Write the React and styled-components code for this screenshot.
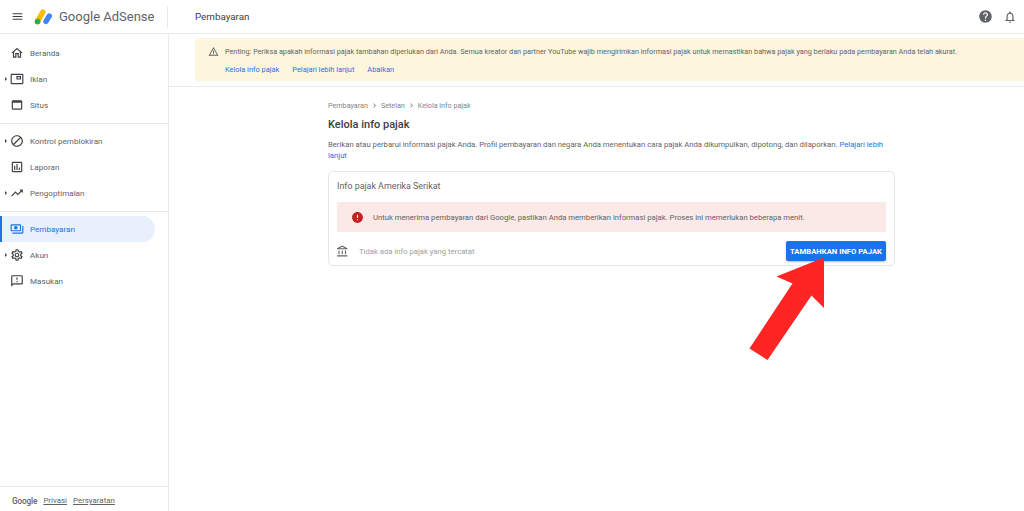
import styled, { createGlobalStyle } from "styled-components"
import {
  MdMenu, MdHelp, MdOutlineNotifications, MdOutlineHome, MdOutlinePictureInPicture, MdOutlineWebAsset,
  MdBlock, MdOutlineAssessment, MdTrendingUp, MdOutlinePayments, MdOutlineSettings,
  MdOutlineFeedback, MdWarningAmber, MdError, MdOutlineAccountBalance, MdChevronRight,
} from "react-icons/md"

const GlobalStyle = createGlobalStyle`
  html, body { margin: 0; padding: 0; background: #fff; }
  body { font-family: Roboto, "Liberation Sans", sans-serif; color: #3c4043; }
  a { text-decoration: none; color: inherit; }
`

const Page = styled.div`
  position: relative;
  width: 1024px;
  height: 511px;
  overflow: hidden;
  display: flex;
  flex-direction: column;
`

const TopBar = styled.header`
  height: 33px;
  flex: none;
  display: flex;
  align-items: center;
  border-bottom: 1px solid #e8eaed;
  padding-left: 11px;
  padding-right: 7px;
`

const Brand = styled.div`
  width: 156px;
  display: flex;
  align-items: center;
  color: #3c4043;
  .name {
    margin-left: 5px;
    font-size: 13px;
    color: #5f6368;
    white-space: nowrap;
  }
  .logo { margin-left: 10px; }
`

const PageName = styled.div`
  height: 22px;
  line-height: 22px;
  border-left: 1px solid #e8eaed;
  padding-left: 27px;
  font-size: 9.8px;
  color: #3c4043;
  flex: 1;
`

const TopActions = styled.div`
  display: flex;
  align-items: center;
  gap: 10px;
  color: #5f6368;
`

const Body = styled.div`
  flex: 1;
  display: flex;
  min-height: 0;
`

const Sidebar = styled.aside`
  width: 168px;
  flex: none;
  display: flex;
  flex-direction: column;
  border-right: 1px solid #e8eaed;
`

const NavGroup = styled.nav`
  padding: ${(p) => p.$padding};
  border-bottom: ${(p) => (p.$divided ? "1px solid #e8eaed" : "none")};
`

const NavRow = styled.a`
  position: relative;
  height: 26px;
  width: 155px;
  display: flex;
  align-items: center;
  padding-left: 10px;
  box-sizing: border-box;
  column-gap: 6px;
  font-size: 8.1px;
  color: ${(p) => (p.$active ? "#1a73e8" : "#5f6368")};
  background: ${(p) => (p.$active ? "#e8f0fe" : "transparent")};
  border-radius: 0 13px 13px 0;
  box-shadow: ${(p) => (p.$active ? "inset 2px 0 0 #1a73e8" : "none")};
  svg { flex: none; color: ${(p) => (p.$active ? "#1a73e8" : "#3c4043")}; }
`

const Caret = styled.span`
  position: absolute;
  left: 5px;
  top: 50%;
  margin-top: -2px;
  border-left: 2.5px solid #3c4043;
  border-top: 2px solid transparent;
  border-bottom: 2px solid transparent;
`

const SideFooter = styled.footer`
  margin-top: auto;
  height: 25px;
  box-sizing: border-box;
  border-top: 1px solid #e8eaed;
  display: flex;
  align-items: center;
  column-gap: 6px;
  padding: 3px 0 0 12px;
  font-size: 7.9px;
  color: #5f6368;
  b { font-weight: 500; font-size: 8.2px; letter-spacing: -0.1px; }
  a { text-decoration: underline; }
`

const Main = styled.main`
  flex: 1;
  min-width: 0;
`

const Notice = styled.section`
  margin: 4px 0 0 26px;
  height: 43px;
  box-sizing: border-box;
  background: #fdf6dd;
  border-radius: 4px 0 0 4px;
  padding: 6px 0 0 13px;
  display: grid;
  grid-template-columns: 17px 1fr;
  grid-template-rows: 15px 20px;
  align-items: center;
  svg { color: #5f6368; }
  p { margin: 0; font-size: 7.25px; color: #5f6368; white-space: nowrap; }
`

const NoticeLinks = styled.div`
  grid-column: 2;
  display: flex;
  column-gap: 13px;
  font-size: 7.4px;
  color: #1a73e8;
`

const Rule = styled.div`
  height: 1px;
  margin-top: 5px;
  background: #e8eaed;
`

const Content = styled.div`
  width: 567px;
  margin-left: 159px;
`

const Crumbs = styled.div`
  margin-top: 13px;
  height: 11px;
  display: flex;
  align-items: center;
  font-size: 7.2px;
  color: #80868b;
  svg { margin: 0 2px; }
`

const Title = styled.h1`
  margin: 4px 0 0;
  height: 20px;
  line-height: 20px;
  font-size: 11px;
  font-weight: 500;
  color: #3c4043;
`

const Intro = styled.p`
  margin: 4px 0 0;
  font-size: 7.69px;
  line-height: 11px;
  color: #5f6368;
  a { color: #1a73e8; }
`

const Card = styled.section`
  margin-top: 10px;
  height: 95px;
  box-sizing: border-box;
  border: 1px solid #e3e5e8;
  border-radius: 5px;
  padding: 0 8px;
`

const CardTitle = styled.h2`
  margin: 0;
  height: 30px;
  line-height: 29px;
  font-size: 8.9px;
  font-weight: 400;
  color: #5f6368;
`

const AlertBox = styled.div`
  height: 30px;
  background: #fae9e7;
  display: flex;
  align-items: center;
  padding-left: 14px;
  column-gap: 9px;
  font-size: 7.68px;
  color: #5f6368;
  svg { color: #c5221f; }
`

const CardRow = styled.div`
  margin-top: 9px;
  height: 20px;
  display: flex;
  align-items: center;
  column-gap: 10px;
  font-size: 7.7px;
  color: #9aa0a6;
  svg { color: #5f6368; margin-left: -1px; }
`

const AddButton = styled.button`
  margin-left: auto;
  width: 100px;
  height: 20px;
  padding: 0;
  border: none;
  border-radius: 2px;
  background: #1a73e8;
  box-shadow: 0 1px 2px rgba(60, 64, 67, 0.35);
  color: #fff;
  font-family: inherit;
  font-size: 7.7px;
  font-weight: 700;
`

const Arrow = styled.svg`
  position: absolute;
  left: 0;
  top: 0;
  pointer-events: none;
`

const Logo = () => (
  <svg className="logo" width="20" height="18" viewBox="0 0 20 18">
    <path d="M3.6 13.2 8.9 4" stroke="#fbbc04" strokeWidth="5.4" strokeLinecap="round" />
    <path d="M12 13.4 15.3 8" stroke="#4285f4" strokeWidth="5.4" strokeLinecap="round" />
    <circle cx="3.6" cy="13.6" r="2.9" fill="#34a853" />
  </svg>
)

const groups = [
  {
    padding: "6px 0 5px",
    divided: true,
    items: [
      { label: "Beranda", Icon: MdOutlineHome },
      { label: "Iklan", Icon: MdOutlinePictureInPicture, caret: true },
      { label: "Situs", Icon: MdOutlineWebAsset },
    ],
  },
  {
    padding: "4px 0 5px",
    divided: true,
    items: [
      { label: "Kontrol pemblokiran", Icon: MdBlock, caret: true },
      { label: "Laporan", Icon: MdOutlineAssessment },
      { label: "Pengoptimalan", Icon: MdTrendingUp, caret: true },
    ],
  },
  {
    padding: "4px 0 0",
    items: [
      { label: "Pembayaran", Icon: MdOutlinePayments, active: true },
      { label: "Akun", Icon: MdOutlineSettings, caret: true },
      { label: "Masukan", Icon: MdOutlineFeedback },
    ],
  },
]

const App = () => {
  return (
    <Page>
      <GlobalStyle />
      <TopBar>
        <Brand>
          <MdMenu size={13} />
          <Logo />
          <span className="name">Google AdSense</span>
        </Brand>
        <PageName>Pembayaran</PageName>
        <TopActions>
          <MdHelp size={15} />
          <MdOutlineNotifications size={14} />
        </TopActions>
      </TopBar>
      <Body>
        <Sidebar>
          {groups.map((group) => (
            <NavGroup key={group.items[0].label} $padding={group.padding} $divided={group.divided}>
              {group.items.map(({ label, Icon, caret, active }) => (
                <NavRow key={label} $active={active}>
                  {caret && <Caret />}
                  <Icon size={14} />
                  {label}
                </NavRow>
              ))}
            </NavGroup>
          ))}
          <SideFooter>
            <b>Google</b>
            <a>Privasi</a>
            <a>Persyaratan</a>
          </SideFooter>
        </Sidebar>
        <Main>
          <Notice>
            <MdWarningAmber size={11} />
            <p>
              Penting: Periksa apakah informasi pajak tambahan diperlukan dari Anda. Semua kreator dan partner YouTube
              wajib mengirimkan informasi pajak untuk memastikan bahwa pajak yang berlaku pada pembayaran Anda telah
              akurat.
            </p>
            <NoticeLinks>
              <a>Kelola info pajak</a>
              <a>Pelajari lebih lanjut</a>
              <a>Abaikan</a>
            </NoticeLinks>
          </Notice>
          <Rule />
          <Content>
            <Crumbs>
              Pembayaran
              <MdChevronRight size={9} />
              Setelan
              <MdChevronRight size={9} />
              Kelola info pajak
            </Crumbs>
            <Title>Kelola info pajak</Title>
            <Intro>
              Berikan atau perbarui informasi pajak Anda. Profil pembayaran dan negara Anda menentukan cara pajak Anda
              dikumpulkan, dipotong, dan dilaporkan. <a>Pelajari lebih lanjut</a>
            </Intro>
            <Card>
              <CardTitle>Info pajak Amerika Serikat</CardTitle>
              <AlertBox>
                <MdError size={13} />
                Untuk menerima pembayaran dari Google, pastikan Anda memberikan informasi pajak. Proses ini memerlukan
                beberapa menit.
              </AlertBox>
              <CardRow>
                <MdOutlineAccountBalance size={13} />
                Tidak ada info pajak yang tercatat
                <AddButton>TAMBAHKAN INFO PAJAK</AddButton>
              </CardRow>
            </Card>
          </Content>
        </Main>
      </Body>
      <Arrow width="1024" height="511" viewBox="0 0 1024 511">
        <polygon points="824,257.5 776.5,276.5 792.5,283.5 749.5,348.5 767.5,360 811.5,295.5 824,308" fill="#ff2525" />
      </Arrow>
    </Page>
  )
}

export default App
